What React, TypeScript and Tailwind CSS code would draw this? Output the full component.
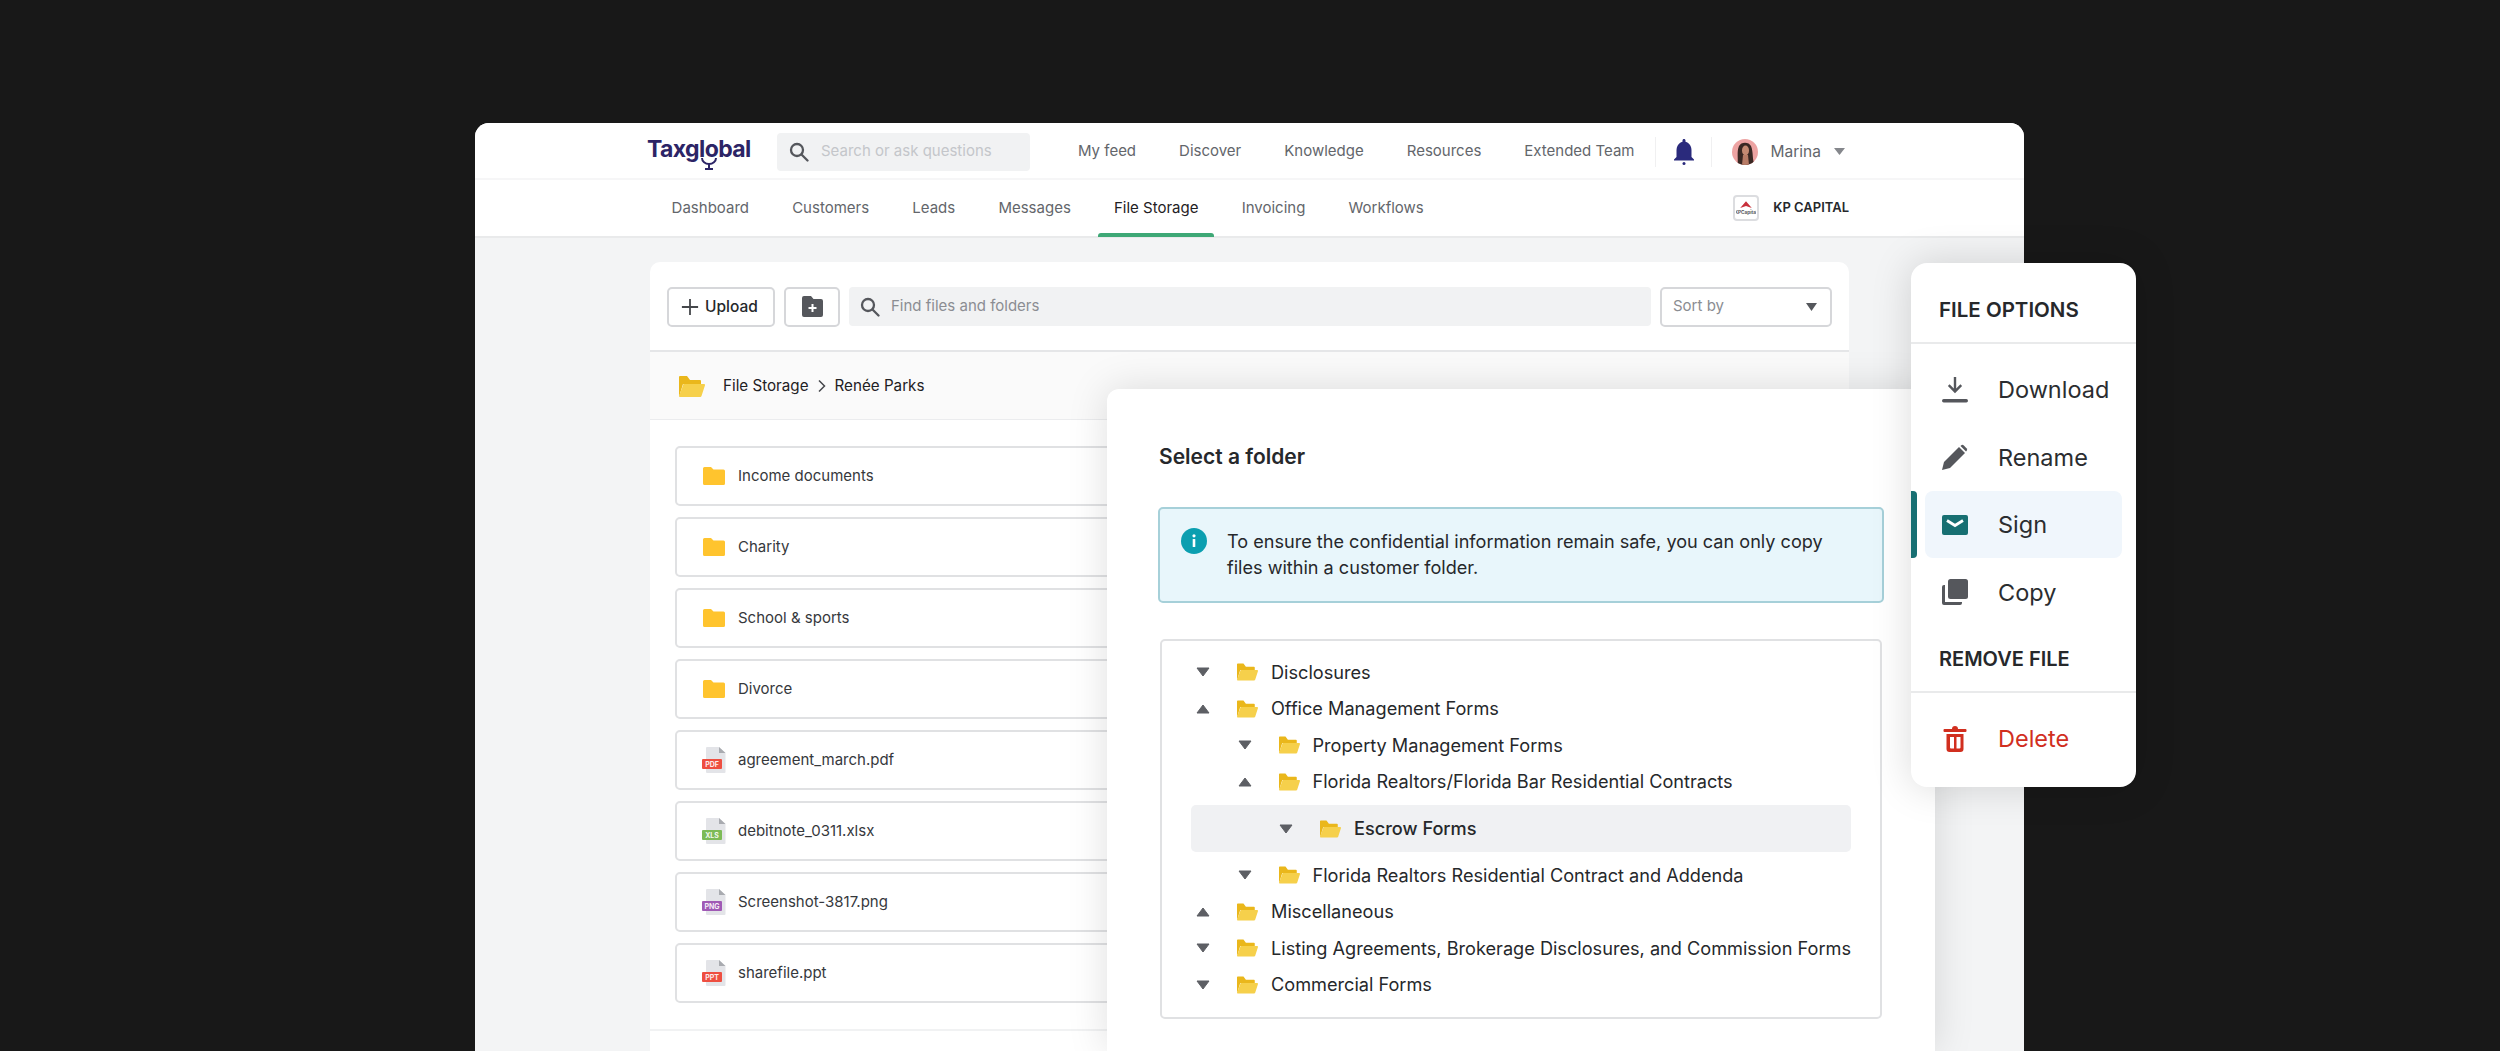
const navLinks = ["My feed", "Discover", "Knowledge", "Resources", "Extended Team"];
const tabs = ["Dashboard", "Customers", "Leads", "Messages", "File Storage", "Invoicing", "Workflows"];

const files = [
  { name: "Income documents" },
  { name: "Charity" },
  { name: "School & sports" },
  { name: "Divorce" },
  { name: "agreement_march.pdf", label: "PDF", color: "#ee4f41" },
  { name: "debitnote_0311.xlsx", label: "XLS", color: "#7dbb57" },
  { name: "Screenshot-3817.png", label: "PNG", color: "#a05ab5" },
  { name: "sharefile.ppt", label: "PPT", color: "#ee4f41" },
];

const tree = [
  { name: "Disclosures", level: 0, open: false },
  { name: "Office Management Forms", level: 0, open: true },
  { name: "Property Management Forms", level: 1, open: false },
  { name: "Florida Realtors/Florida Bar Residential Contracts", level: 1, open: true },
  { name: "Escrow Forms", level: 2, open: false, active: true },
  { name: "Florida Realtors Residential Contract and Addenda", level: 1, open: false },
  { name: "Miscellaneous", level: 0, open: true },
  { name: "Listing Agreements, Brokerage Disclosures, and Commission Forms", level: 0, open: false },
  { name: "Commercial Forms", level: 0, open: false },
];

const levelPadding = ["pl-[5px]", "pl-[46.5px]", "pl-[88px]"];

const SearchIcon = () => (
  <svg width="20" height="20" viewBox="0 0 20 20" fill="none" stroke="#55575c" strokeWidth="2.3" className="shrink-0">
    <circle cx="8" cy="8" r="6" />
    <path d="M12.5 12.5 18.5 18.5" strokeLinecap="round" />
  </svg>
);

const Caret = ({ up = false }: { up?: boolean }) => (
  <svg width="14" height="10" viewBox="0 0 14 10" className="shrink-0">
    <path d={up ? "M7 1 13 9H1Z" : "M1 1H13L7 9Z"} fill="#5d5f64" stroke="#5d5f64" strokeLinejoin="round" />
  </svg>
);

const OpenFolder = ({ w = 21, h = 18 }: { w?: number; h?: number }) => (
  <svg width={w} height={h} viewBox="0 0 26 21" className="shrink-0">
    <path d="M0 1a1 1 0 0 1 1-1h7l3 4h10a1 1 0 0 1 1 1v3H4L0 21Z" fill="#eab71b" />
    <path d="M4.500 8H25a1 1 0 0 1 1 1.200L22.500 20a1.500 1.500 0 0 1-1.500 1H1a1 1 0 0 1-1-1Z" fill="#f6d04b" />
  </svg>
);

const FlatFolder = () => (
  <svg width="22" height="18" viewBox="0 0 22 18" className="shrink-0">
    <path d="M0 1.500A1.500 1.500 0 0 1 1.500 0H8l2.500 2.500h10A1.500 1.500 0 0 1 22 4v12.500a1.500 1.500 0 0 1-1.500 1.500h-19A1.500 1.500 0 0 1 0 16.500Z" fill="#ffc42e" />
  </svg>
);

const FileIcon = ({ label, color }: { label: string; color: string }) => (
  <svg width="24" height="26" viewBox="0 0 24 26" className="shrink-0">
    <path d="M4 1a1 1 0 0 1 1-1h12l6.500 6v19a1 1 0 0 1-1 1H5a1 1 0 0 1-1-1Z" fill="#e3e4e8" />
    <path d="M17 0v6h6.500Z" fill="#a9abb0" />
    <rect x="0" y="12" width="20" height="10" rx="1" fill={color} />
    <text x="10" y="20" textAnchor="middle" fontSize="7" fontWeight="700" fill="#ffffff" fontFamily="Inter, sans-serif" opacity="0.9">
      {label}
    </text>
  </svg>
);

const Logo = () => (
  <div className="relative w-[130px] h-[34px] flex items-start">
    <span className="text-[23px] leading-[28px] font-bold tracking-[-0.6px] text-[#2c2466]">Taxglobal</span>
    <svg width="18" height="13" viewBox="0 0 18 13" fill="none" stroke="#2c2466" strokeWidth="2" className="absolute left-[53px] top-[22px]">
      <path d="M2 1a7 6 0 0 0 14 0" />
      <path d="M9 7v4.500M5 12h8" />
    </svg>
  </div>
);

const Avatar = () => (
  <svg width="26" height="26" viewBox="0 0 26 26" className="shrink-0">
    <clipPath id="avatar-clip">
      <circle cx="13" cy="13" r="13" />
    </clipPath>
    <g clipPath="url(#avatar-clip)">
      <rect width="26" height="26" fill="#eda3a2" />
      <path d="M5.500 26c1-7-1-13 1.500-19 2-4.500 10-4.500 12 0 2.500 6 1 13 3.500 19Z" fill="#3a2823" />
      <ellipse cx="13.500" cy="11.500" rx="3.500" ry="5" fill="#c58a72" />
      <path d="M11 16h5l1 10h-7Z" fill="#b87c66" />
    </g>
  </svg>
);

const KpLogo = () => (
  <div className="w-[26px] h-[26px] border-2 border-[#dcdde0] rounded-[4px] flex items-center justify-center">
    <svg width="20" height="20" viewBox="0 0 19 19">
      <path d="M9.500 3 15 9.500 9.500 7.500 4 9.500Z" fill="#c8303c" />
      <text x="9.500" y="15.500" textAnchor="middle" fontSize="4.500" fontWeight="700" fill="#55575c" fontFamily="Inter, sans-serif">
        KPCapital
      </text>
    </svg>
  </div>
);

const MenuRow = ({ icon, label, active = false }: { icon: React.ReactNode; label: string; active?: boolean }) => (
  <div className="relative h-[67.5px] flex items-center">
    {active && <div className="absolute left-0 top-0 h-[67px] w-[6px] rounded-r-[4px] bg-[#176f72]" />}
    <div className={`mx-[14px] h-[67px] w-[197px] pl-[17px] flex items-center gap-[30px] rounded-[8px] ${active ? "bg-[#f0f6fc]" : ""}`}>
      {icon}
      <span className="text-[23.5px] text-[#2b2d30]">{label}</span>
    </div>
  </div>
);

export default function App() {
  return (
    <div className="relative h-[1051px] w-[2500px] overflow-hidden bg-[#181818] pl-[475px] pt-[123px] [font-family:Inter,sans-serif]">
      <div className="w-[1549px] h-[928px] overflow-hidden rounded-t-[14px] bg-[#f3f4f5] flex flex-col">
        <div className="h-[57px] shrink-0 bg-white border-b-2 border-[#f6f6f7] pl-[172px] pt-[2px] flex items-center">
          <Logo />
          <div className="w-[253px] h-[38px] rounded-[4px] bg-[#f1f2f3] pl-[12px] flex items-center gap-[12px]">
            <SearchIcon />
            <span className="text-[15px] text-[#c4c6ca] whitespace-nowrap">Search or ask questions</span>
          </div>
          <nav className="ml-[48px] flex items-center gap-[43px] text-[15px] text-[#63666b]">
            {navLinks.map((link) => (
              <span key={link}>{link}</span>
            ))}
          </nav>
          <div className="ml-[21px] h-[30px] w-px bg-[#f0f0f1]" />
          <div className="w-[55px] flex justify-center">
            <svg width="22" height="26" viewBox="0 0 22 26" fill="#2a2a7c">
              <path d="M11 0c.9 0 1.500.7 1.500 1.500v1.300C16.500 4 18.500 7.500 18.500 11.500V18l2.500 2.500v1H1v-1L3.500 18v-6.500c0-4 2-7.500 6-8.700V1.500C9.500.7 10.100 0 11 0Z" />
              <circle cx="11" cy="24.500" r="1.500" />
            </svg>
          </div>
          <div className="h-[30px] w-px bg-[#f0f0f1]" />
          <div className="ml-[20px] flex items-center gap-[12px]">
            <Avatar />
            <span className="text-[15.500px] text-[#63666b]">Marina</span>
            <svg width="11" height="7" viewBox="0 0 11 7" className="ml-[1px]">
              <path d="M0 0H11L5.500 7Z" fill="#85878c" />
            </svg>
          </div>
        </div>

        <div className="h-[58px] shrink-0 bg-white border-b-2 border-[#e9eaeb] pl-[175px] flex items-center">
          {tabs.map((tab) =>
            tab === "File Storage" ? (
              <div key={tab} className="relative h-full mx-[5.600px] px-[16px] flex items-center text-[15px] text-[#1f2124]">
                {tab}
                <div className="absolute left-0 right-0 bottom-[-1px] h-[4px] rounded-t-[3px] bg-[#3ea876]" />
              </div>
            ) : (
              <div key={tab} className="h-full mx-[5.600px] px-[16px] flex items-center text-[15px] text-[#63666b]">
                {tab}
              </div>
            ),
          )}
          <div className="ml-auto mr-[175px] flex items-center gap-[14px]">
            <KpLogo />
            <span className="text-[13px] font-semibold text-[#26282b] whitespace-nowrap">KP CAPITAL</span>
          </div>
        </div>

        <div className="ml-[175px] mt-[24px] w-[1199px] grow rounded-t-[10px] bg-white">
          <div className="h-[90px] border-b-2 border-[#e5e6e8] px-[17px] pt-[1px] flex items-center gap-[9px]">
            <div className="w-[108px] h-[40px] border-2 border-[#d6d7da] rounded-[5px] pl-[12px] flex items-center gap-[6px]">
              <svg width="18" height="18" viewBox="0 0 20 20" stroke="#45474b" strokeWidth="2">
                <path d="M10 1v18M1 10h18" />
              </svg>
              <span className="text-[15.500px] font-medium text-[#26282b]">Upload</span>
            </div>
            <div className="w-[56px] h-[40px] border-2 border-[#d6d7da] rounded-[5px] flex items-center justify-center">
              <svg width="21" height="21" viewBox="0 0 21 21">
                <path d="M0 2a2 2 0 0 1 2-2h7l2.500 3H19a2 2 0 0 1 2 2v14a2 2 0 0 1-2 2H2a2 2 0 0 1-2-2Z" fill="#55575c" />
                <path d="M10.500 8v8M6.500 12h8" stroke="#ffffff" strokeWidth="2" />
              </svg>
            </div>
            <div className="grow h-[39px] rounded-[4px] bg-[#f1f2f3] pl-[11px] flex items-center gap-[11px]">
              <SearchIcon />
              <span className="text-[15px] text-[#8b8d92]">Find files and folders</span>
            </div>
            <div className="w-[172px] h-[40px] border-2 border-[#d6d7da] rounded-[5px] pl-[11px] pr-[13px] flex items-center justify-between">
              <span className="text-[15px] text-[#8b8d92]">Sort by</span>
              <svg width="11" height="8" viewBox="0 0 11 8">
                <path d="M0 0H11L5.500 8Z" fill="#55575c" />
              </svg>
            </div>
          </div>

          <div className="h-[68px] border-b border-[#ebecee] bg-[#fafafa] pl-[29px] pt-[1px] flex items-center">
            <OpenFolder w={26} h={21} />
            <span className="ml-[18px] text-[15.200px] text-[#1f2124]">File Storage</span>
            <svg width="10" height="14" viewBox="0 0 10 14" fill="none" stroke="#45474b" strokeWidth="1.500" className="mx-[8px]">
              <path d="M2 1.500 7.500 7 2 12.500" />
            </svg>
            <span className="text-[15.200px] text-[#1f2124]">Renée Parks</span>
          </div>

          <div className="border-b-2 border-[#f1f2f3] px-[25px] pt-[26px] pb-[26px] flex flex-col gap-[11px]">
            {files.map((file) => (
              <div key={file.name} className="h-[60px] border-2 border-[#e0e1e3] rounded-[5px] pl-[25px] flex items-center gap-[13px]">
                <div className="w-[23px] flex justify-center">
                  {file.label ? <FileIcon label={file.label} color={file.color} /> : <FlatFolder />}
                </div>
                <span className="text-[15px] text-[#36383c]">{file.name}</span>
              </div>
            ))}
          </div>
        </div>
      </div>

      <div className="absolute left-[1107px] top-[389px] w-[828px] h-[662px] rounded-t-[12px] bg-white pl-[52px] pt-[54px] shadow-[0_0_40px_rgba(0,0,0,0.13)]">
        <h2 className="text-[21px] leading-[28px] font-semibold text-[#26282b]">Select a folder</h2>
        <div className="mt-[36px] -ml-[1px] w-[726px] h-[96px] rounded-[5px] border-2 border-[#a6d0d9] bg-[#e8f6fb] pl-[21px] pt-[19px] flex gap-[20px]">
          <svg width="26" height="26" viewBox="0 0 26 26" className="shrink-0">
            <circle cx="13" cy="13" r="13" fill="#0b9fb0" />
            <circle cx="13" cy="7.800" r="1.600" fill="#ffffff" />
            <rect x="11.700" y="11" width="2.600" height="8" rx="0.600" fill="#ffffff" />
          </svg>
          <p className="text-[18.100px] leading-[26px] text-[#26282b] w-[620px]">
            To ensure the confidential information remain safe, you can only copy files within a customer folder.
          </p>
        </div>
        <div className="mt-[36px] ml-[1px] w-[722px] h-[380px] rounded-[5px] border-2 border-[#e0e1e3] px-[29px] pt-[13px]">
          {tree.map((row) => (
            <div
              key={row.name}
              className={`flex items-center whitespace-nowrap ${levelPadding[row.level]} ${
                row.active ? "h-[47px] my-[5px] rounded-[5px] bg-[#f0f1f3] font-medium" : "h-[36.500px]"
              }`}
            >
              <Caret up={row.open} />
              <div className="ml-[27px] mr-[13px]">
                <OpenFolder />
              </div>
              <span className="text-[18.150px] text-[#26282b]">{row.name}</span>
            </div>
          ))}
        </div>
      </div>

      <div className="absolute left-[1911px] top-[263px] w-[225px] h-[524px] rounded-[16px] bg-white shadow-[0_0_40px_rgba(0,0,0,0.15)]">
        <div className="h-[81px] border-b-2 border-[#e9eaeb] pl-[28px] pt-[16px] flex items-center text-[20.500px] font-semibold text-[#26282b]">
          FILE OPTIONS
        </div>
        <div className="pt-[12px]">
          <MenuRow
            label="Download"
            icon={
              <svg width="26" height="26" viewBox="0 0 26 26" fill="#55575c">
                <path d="M11.800 0h2.400v11.500l4.200-4.200 1.700 1.700L13 16.200 5.900 9l1.700-1.700 4.200 4.200Z" />
                <rect y="22" width="26" height="3.400" rx="1.700" />
              </svg>
            }
          />
          <MenuRow
            label="Rename"
            icon={
              <svg width="26" height="26" viewBox="0 0 26 26" fill="#55575c">
                <path d="M0 26 2 18 17 3 23 9 8 24Z" />
                <path d="M19 1.500a2 2 0 0 1 2.800 0l2.700 2.700a2 2 0 0 1 0 2.800L24 7.500 18.500 2Z" />
              </svg>
            }
          />
          <MenuRow
            active
            label="Sign"
            icon={
              <svg width="26" height="20" viewBox="0 0 26 20">
                <rect width="26" height="20" rx="2" fill="#176f72" />
                <path d="M5 5.500 13 10.500 21 5.500" fill="none" stroke="#ffffff" strokeWidth="2.800" />
              </svg>
            }
          />
          <MenuRow
            label="Copy"
            icon={
              <svg width="26" height="26" viewBox="0 0 26 26" fill="#55575c">
                <rect x="6" width="20" height="20" rx="2.500" />
                <path d="M0 8a2 2 0 0 1 2-2h1v17h17v1a2 2 0 0 1-2 2H2a2 2 0 0 1-2-2Z" />
              </svg>
            }
          />
        </div>
        <div className="h-[66.500px] border-b-2 border-[#e9eaeb] pl-[28px] pt-[2px] flex items-center text-[20px] font-semibold text-[#26282b]">
          REMOVE FILE
        </div>
        <div className="h-[92px] pl-[31px] flex items-center gap-[30px]">
          <svg width="26" height="26" viewBox="0 0 26 26" fill="#d12f1f">
            <path d="M10 3a3 3 0 0 1 6 0h7.500a1 1 0 0 1 1 1v1a1 1 0 0 1-1 1h-21a1 1 0 0 1-1-1V4a1 1 0 0 1 1-1Z" />
            <path d="M4.500 8h17v15a3 3 0 0 1-3 3h-11a3 3 0 0 1-3-3Zm3.500 3v10.500a1 1 0 0 0 1 1h3V11Zm6.500 0v11.500h3a1 1 0 0 0 1-1V11Z" fillRule="evenodd" />
          </svg>
          <span className="text-[23.500px] text-[#d12f1f]">Delete</span>
        </div>
      </div>
    </div>
  );
}
